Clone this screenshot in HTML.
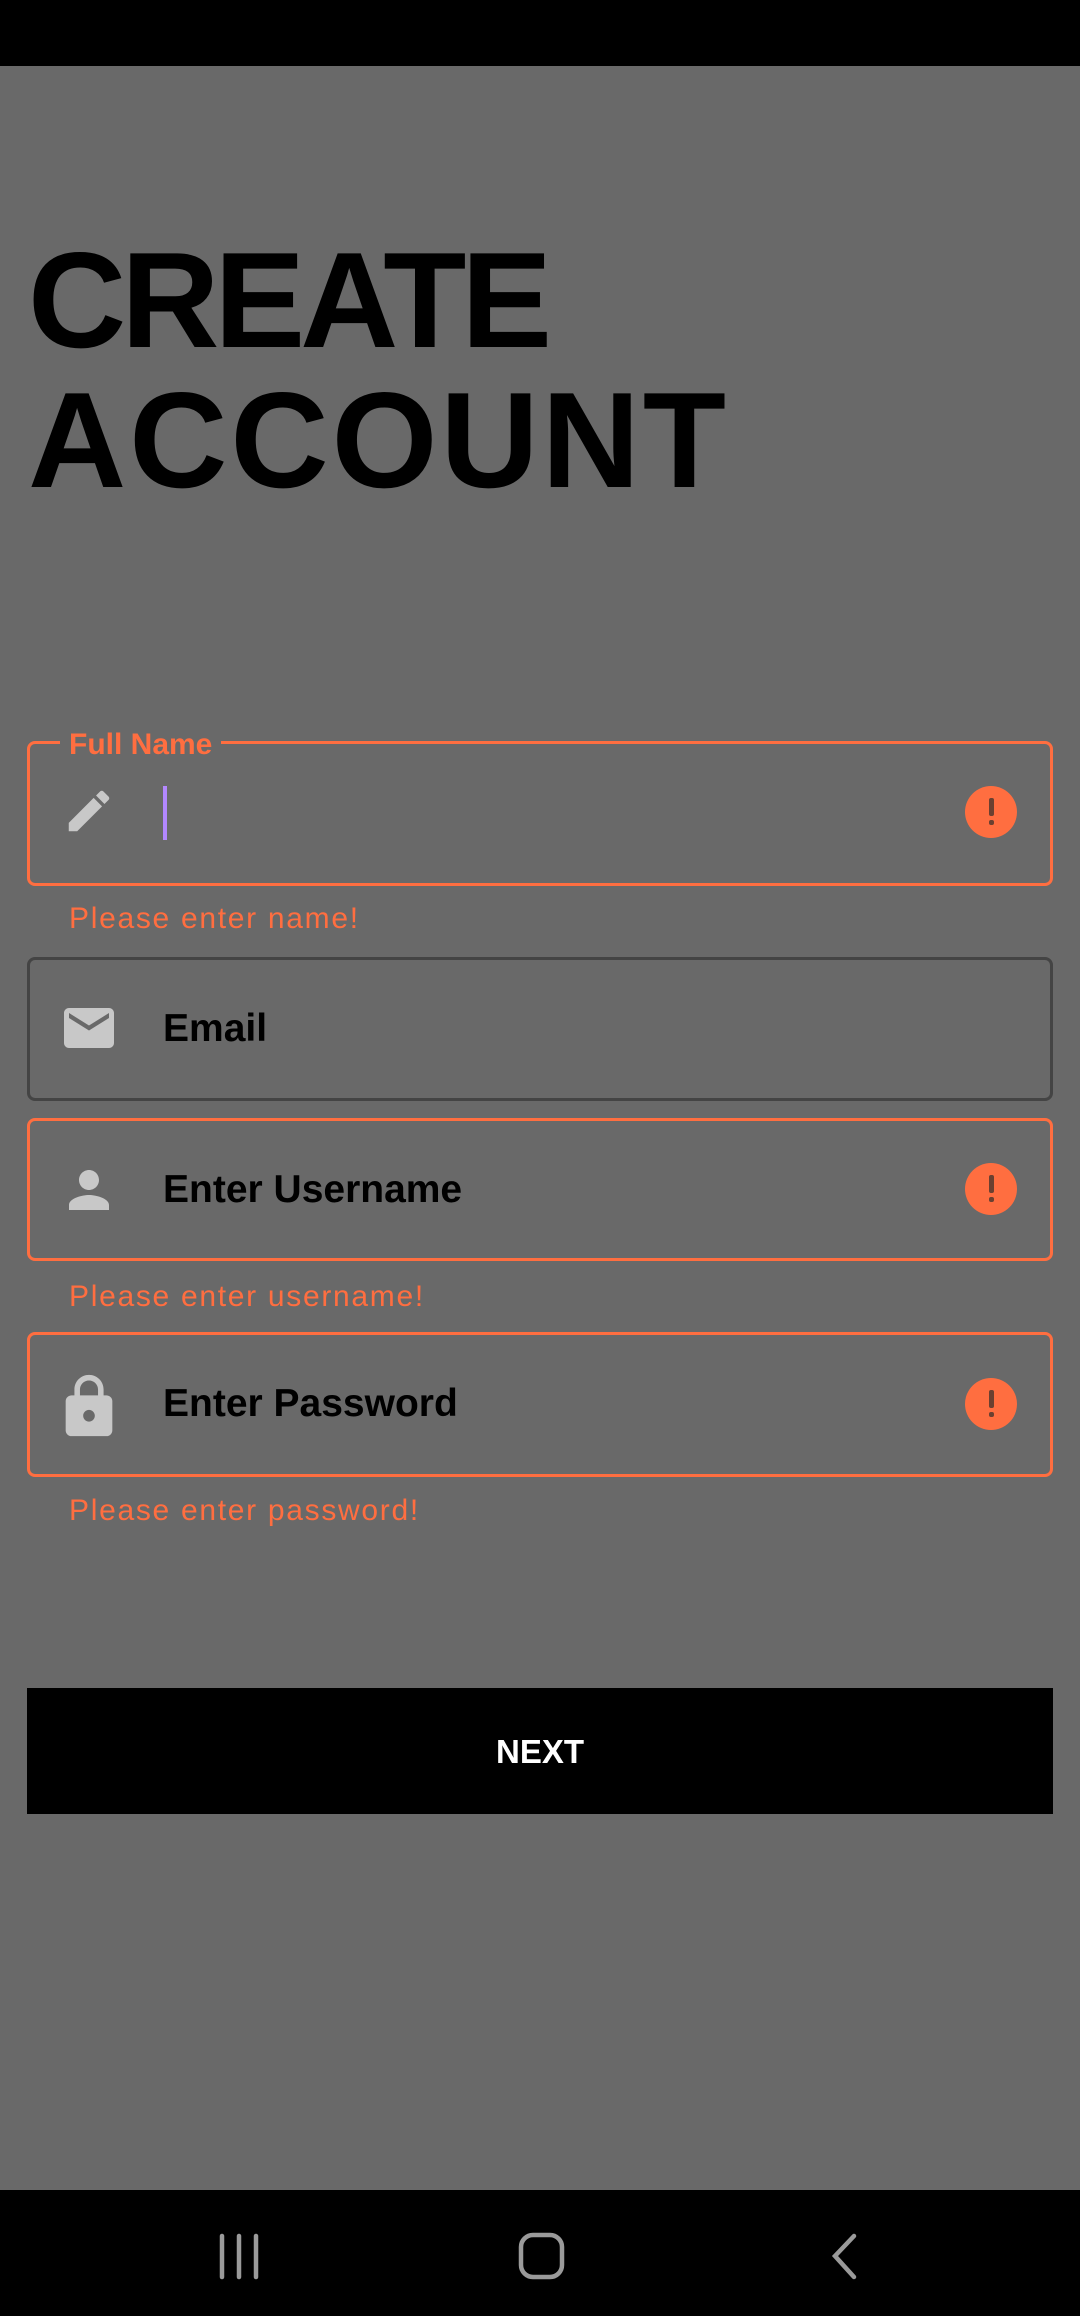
<!DOCTYPE html>
<html><head><meta charset="utf-8"><style>
*{margin:0;padding:0;box-sizing:border-box}
body{width:1080px;height:2316px;background:#696969;position:relative;overflow:hidden;font-family:"Liberation Sans",sans-serif}
.abs{position:absolute}
.title{left:28px;font-weight:bold;font-size:136px;color:#000;line-height:1}
.box{position:absolute;left:27px;width:1026px;border:3px solid #ff6e40;border-radius:8px}
.lbl{left:163px;font-weight:bold;font-size:39px;color:#000}
.err{left:69px;font-size:30px;color:#ff6e40;letter-spacing:1.7px}
.alert{position:absolute;left:965px;width:52px;height:52px;border-radius:50%;background:#ff6e40}
.alert:before{content:"";position:absolute;left:24px;top:12px;width:5px;height:18px;background:#6b4030;border-radius:2px}
.alert:after{content:"";position:absolute;left:24px;top:34px;width:5px;height:5px;background:#6b4030;border-radius:2px}
</style></head><body>
<div class="abs" style="left:0;top:0;width:1080px;height:66px;background:#000"></div>
<div class="abs title" style="top:232px;letter-spacing:-5px">CREATE</div>
<div class="abs title" style="top:372px;letter-spacing:3px">ACCOUNT</div>

<div class="box" style="top:741px;height:145px"></div>
<div class="abs" style="left:60px;top:728px;padding:0 9px;background:#696969;color:#ff6e40;font-weight:bold;font-size:30px">Full Name</div>
<svg class="abs" style="left:62px;top:784px" width="54" height="54" viewBox="0 0 24 24"><path fill="#c8c8c8" d="M3 17.25V21h3.75L17.81 9.94l-3.75-3.75L3 17.25zM20.71 7.04a1 1 0 000-1.410l-2.34-2.34a1 1 0 00-1.41 0l-1.83 1.83 3.75 3.75 1.83-1.83z"/></svg>
<div class="abs" style="left:163px;top:786px;width:4px;height:54px;background:#b388ff"></div>
<div class="alert" style="top:786px"></div>
<div class="abs err" style="top:902px">Please enter name!</div>

<div class="box" style="top:957px;height:144px;border:3px solid #444"></div>
<svg class="abs" style="left:59px;top:998px" width="60" height="60" viewBox="0 0 24 24"><path fill="#c8c8c8" d="M20 4H4c-1.1 0-2 .9-2 2v12c0 1.1.9 2 2 2h16c1.1 0 2-.9 2-2V6c0-1.1-.9-2-2-2zm0 4l-8 5-8-5V6l8 5 8-5v2z"/></svg>
<div class="abs lbl" style="top:1007px">Email</div>

<div class="box" style="top:1118px;height:143px"></div>
<svg class="abs" style="left:59px;top:1160px" width="60" height="60" viewBox="0 0 24 24"><path fill="#c8c8c8" d="M12 12c2.21 0 4-1.79 4-4s-1.79-4-4-4-4 1.79-4 4 1.79 4 4 4zm0 2c-2.67 0-8 1.34-8 4v2h16v-2c0-2.66-5.330-4-8-4z"/></svg>
<div class="abs lbl" style="top:1168px">Enter Username</div>
<div class="alert" style="top:1163px"></div>
<div class="abs err" style="top:1280px">Please enter username!</div>

<div class="box" style="top:1332px;height:145px"></div>
<svg class="abs" style="left:54px;top:1372px" width="70" height="70" viewBox="0 0 24 24"><path fill="#c8c8c8" d="M18 8h-1V6c0-2.76-2.24-5-5-5S7 3.24 7 6v2H6c-1.1 0-2 .9-2 2v10c0 1.1.9 2 2 2h12c1.1 0 2-.9 2-2V10c0-1.1-.9-2-2-2zm-6 9c-1.1 0-2-.9-2-2s.9-2 2-2 2 .9 2 2-.9 2-2 2zm3.1-9H8.9V6c0-1.71 1.39-3.1 3.1-3.1s3.1 1.39 3.1 3.1v2z"/></svg>
<div class="abs lbl" style="top:1382px">Enter Password</div>
<div class="alert" style="top:1378px"></div>
<div class="abs err" style="top:1494px">Please enter password!</div>

<div class="abs" style="left:27px;top:1688px;width:1026px;height:126px;background:#000;color:#fff;font-weight:bold;font-size:33px;text-align:center;line-height:128px">NEXT</div>

<div class="abs" style="left:0;top:2190px;width:1080px;height:126px;background:#000"></div>
<svg class="abs" style="left:0;top:2190px" width="1080" height="126">
<g stroke="#9a9a9a" stroke-width="4.5" stroke-linecap="round" fill="none">
<line x1="222" y1="46" x2="222" y2="87"/><line x1="239" y1="46" x2="239" y2="87"/><line x1="256" y1="46" x2="256" y2="87"/>
<rect x="521" y="45" width="41" height="42" rx="12"/>
<polyline points="854,46 835,66 854,87"/>
</g></svg>
</body></html>
